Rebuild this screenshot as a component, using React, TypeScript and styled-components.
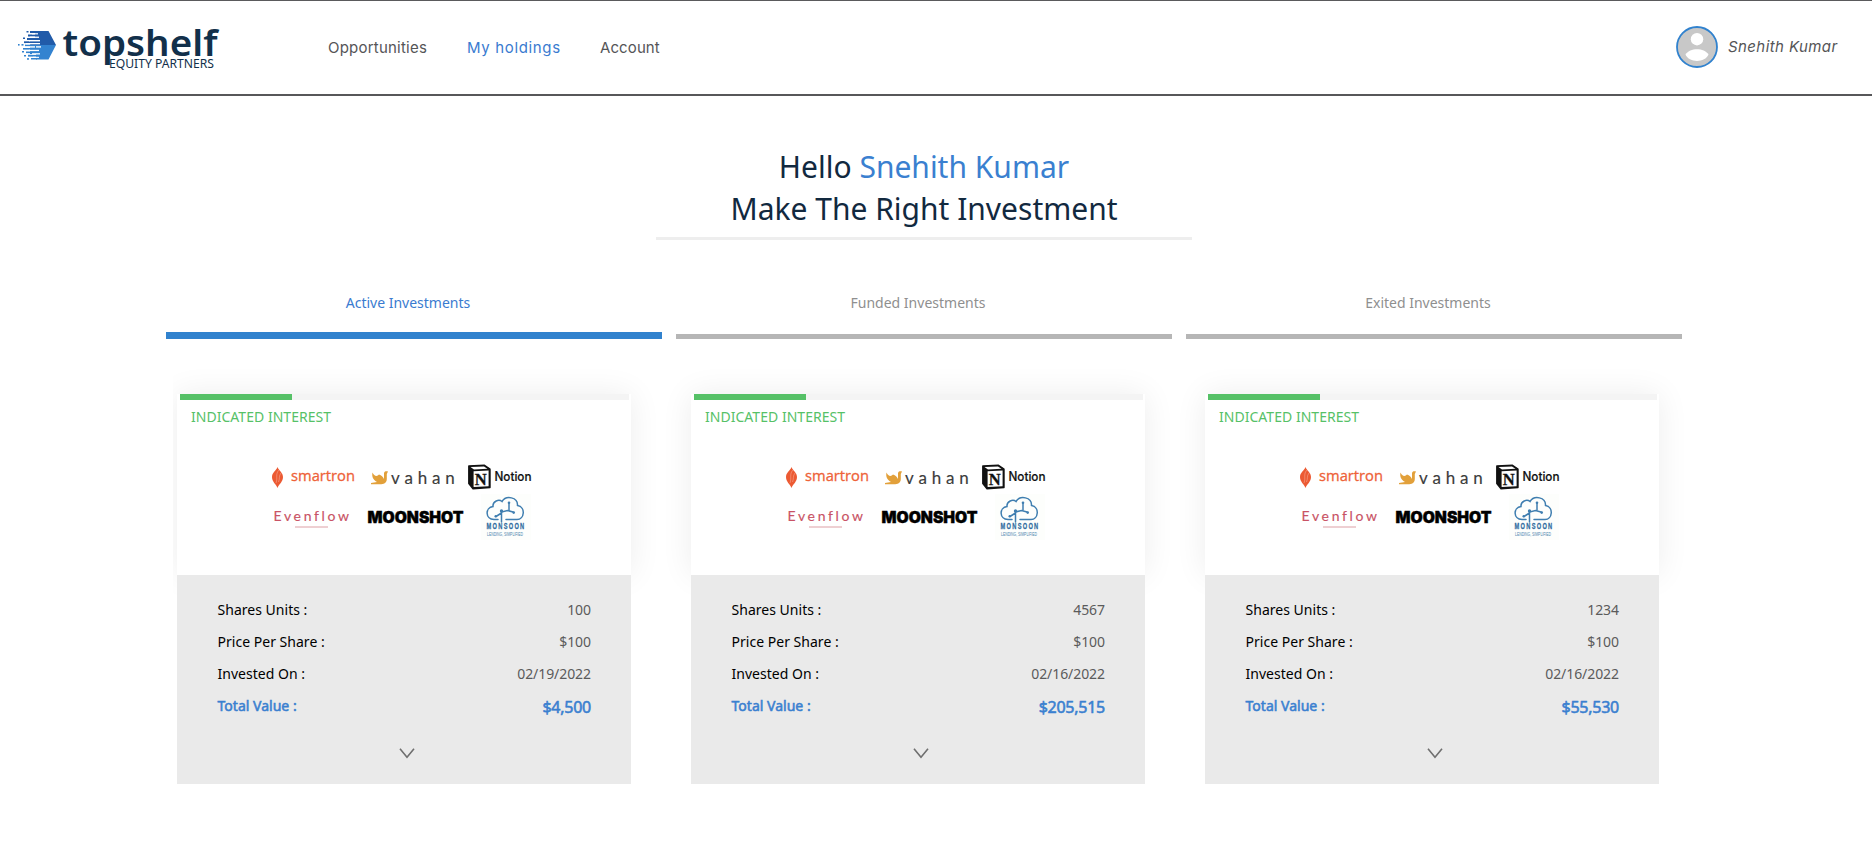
import React from 'react';
import styled, { createGlobalStyle } from 'styled-components';

const GlobalStyle = createGlobalStyle`
  *, *::before, *::after { box-sizing: border-box; }
  body {
    margin: 0;
    background: #fff;
    color: #000;
    font-family: 'Noto Sans', sans-serif;
    font-size: 14px;
    overflow-x: hidden;
  }
`;

const Page = styled.div`
  min-height: 854px;
`;

const Header = styled.header`
  display: flex;
  align-items: flex-start;
  height: 96px;
  border-top: 1px solid #5a5a5c;
  border-bottom: 2px solid #575759;
  background: #fff;
  font-family: Inter, sans-serif;
  color: #4d4d4f;
`;

const Logo = styled.svg`
  display: block;
  flex: none;
  width: 210px;
  height: 60px;
  margin: 17px 0 0 12px;
`;

const Nav = styled.nav`
  display: flex;
  margin: 35px 0 0 106px;
`;

const NavItem = styled.a<{ $active?: boolean; $width: number; $spacing?: number }>`
  width: ${(p) => p.$width}px;
  font-size: 15px;
  line-height: 24px;
  letter-spacing: ${(p) => p.$spacing ?? 0}px;
  white-space: nowrap;
  color: ${(p) => (p.$active ? '#3a7bd0' : '#555557')};
`;

const Profile = styled.div`
  display: flex;
  align-items: center;
  gap: 10px;
  margin: 25px 33px 0 auto;
`;

const Avatar = styled.svg`
  display: block;
  width: 42px;
  height: 42px;
`;

const ProfileName = styled.span`
  width: 111px;
  font-size: 15px;
  font-style: italic;
  line-height: 24px;
  letter-spacing: 0.42px;
  white-space: nowrap;
  color: #555557;
`;

const Main = styled.main`
  width: 1516px;
  margin: 0 0 0 166px;
`;

const Title = styled.h1`
  width: 536px;
  margin: 50px auto 0;
  padding-bottom: 7px;
  border-bottom: 3px solid #eee;
  font-size: 30px;
  font-weight: 400;
  line-height: 42px;
  text-align: center;
  color: #12293f;
`;

const TitleName = styled.span`
  color: #3a80d0;
`;

const Tabs = styled.div`
  display: grid;
  grid-template-columns: repeat(3, 496px);
  gap: 14px;
  margin-top: 47px;
`;

const Tab = styled.button<{ $active?: boolean }>`
  display: flex;
  justify-content: center;
  align-items: flex-start;
  height: 52px;
  padding: 6px 12px 0 0;
  border: 0;
  border-bottom: ${(p) => (p.$active ? '7px solid #3182ce' : '5px solid #b6b6b6')};
  background: none;
  font: inherit;
  line-height: 20px;
  color: ${(p) => (p.$active ? '#3a7bd0' : '#8f8f8f')};
`;

const Cards = styled.div`
  display: grid;
  grid-template-columns: repeat(3, 454px);
  gap: 60px;
  width: 1516px;
  margin: 25px 0 0 7px;
  padding: 30px 0 30px 4px;
  overflow: hidden;
`;

const Card = styled.article`
  display: flex;
  flex-direction: column;
`;

const CardTop = styled.div`
  height: 181px;
  padding: 0 2px 0 3px;
  background: #fff;
  box-shadow: 0 0 30px rgba(0, 0, 0, 0.075);
`;

const Track = styled.div`
  height: 6px;
  background: #f4f4f4;
`;

const Progress = styled.div`
  height: 6px;
  background: #56c167;
`;

const Status = styled.div`
  height: 40px;
  padding: 7px 0 0 11px;
  line-height: 20px;
  letter-spacing: 0.03px;
  color: #56c167;
`;

const Partners = styled.svg`
  display: block;
  width: 300px;
  height: 120px;
  margin-left: 70px;
`;

const Details = styled.div`
  height: 209px;
  padding: 19px 40px 0 40.5px;
  background: #eaeaea;
`;

const Row = styled.div<{ $total?: boolean }>`
  display: flex;
  justify-content: space-between;
  height: 32px;
  line-height: 32px;
  letter-spacing: 0.02px;
  color: ${(p) => (p.$total ? '#3a80d0' : '#000')};
  -webkit-text-stroke: ${(p) => (p.$total ? '0.55px #3a80d0' : '0')};
`;

const Value = styled.span<{ $total?: boolean }>`
  padding-top: ${(p) => (p.$total ? 1 : 0)}px;
  font-size: ${(p) => (p.$total ? 16 : 14)}px;
  letter-spacing: ${(p) => (p.$total ? -0.25 : -0.07)}px;
  color: ${(p) => (p.$total ? '#3a80d0' : '#5b5b5b')};
`;

const Expand = styled.button`
  display: flex;
  justify-content: center;
  width: 100%;
  height: 18px;
  margin-top: 22px;
  padding: 3px 0 0 6px;
  border: 0;
  background: none;
`;

function BrandLogo() {
  return (
    <Logo viewBox="12 18 210 60">
      <path d="M35 31H48.5L56 45H30V39H35Z" fill="#215ba9" />
      <path d="M30 45H56L48.5 59.5H36V54H30Z" fill="#3383d0" />
      <g fill="#215ba9">
        <rect x="26.5" y="31" width="2" height="1.5" />
        <rect x="30" y="31" width="5" height="2" />
        <rect x="28" y="34.5" width="8" height="2" />
        <rect x="23" y="37.5" width="2" height="1.5" />
        <rect x="27" y="38" width="9" height="2" />
        <rect x="24" y="41.3" width="7" height="1.8" />
      </g>
      <g fill="#3383d0">
        <rect x="18" y="44" width="1.6" height="1.6" />
        <rect x="21.5" y="44" width="2" height="1.6" />
        <rect x="25" y="44.6" width="6" height="1.5" />
        <rect x="23" y="48" width="8" height="1.6" />
        <rect x="22" y="51" width="2" height="1.5" />
        <rect x="26" y="51.5" width="6" height="1.6" />
        <rect x="24" y="55" width="2" height="1.5" />
        <rect x="28" y="54.8" width="9" height="1.8" />
        <rect x="27" y="58.2" width="2" height="1.5" />
        <rect x="31" y="58" width="6" height="1.5" />
      </g>
      <g fill="#fff">
        <rect x="32" y="33.2" width="6" height="1.2" />
        <rect x="30" y="36.6" width="9" height="1.3" />
        <rect x="29" y="40" width="11" height="1.4" />
        <rect x="26" y="43" width="14" height="1.3" />
        <rect x="30" y="46.2" width="5" height="1.4" />
        <rect x="36" y="46.2" width="5" height="1.4" />
        <rect x="29" y="49.8" width="10" height="1.3" />
        <rect x="32" y="53.2" width="8" height="1.3" />
        <rect x="33" y="56.8" width="6" height="1.1" />
      </g>
      <text x="62.5" y="55.5" fontFamily="Noto Sans, sans-serif" fontSize="35.5" fontWeight="600" fill="#12304b" textLength="155" lengthAdjust="spacingAndGlyphs">
        topshelf
      </text>
      <text x="109" y="68.3" fontFamily="Noto Sans, sans-serif" fontSize="12.5" fill="#12304b" textLength="105" lengthAdjust="spacingAndGlyphs">
        EQUITY PARTNERS
      </text>
    </Logo>
  );
}

function PartnerLogos() {
  return (
    <Partners viewBox="0 0 300 120">
      <path d="M27.5 27C29 31 33 32.5 33 37C33 42 29 44 27.5 48C26 44 22 42 22 37C22 32.5 26 31 27.5 27Z" fill="#ec5a33" />
      <path d="M29 30C25 34 28 38 26 43M31 33C28.5 36 30 39 28.5 42" fill="none" stroke="#fff" strokeOpacity=".4" strokeWidth=".7" />
      <text x="41" y="41" fontFamily="Open Sans, sans-serif" fontSize="15" fill="#ee6238" stroke="#ee6238" strokeWidth=".3" textLength="64" lengthAdjust="spacingAndGlyphs">
        smartron
      </text>
      <path d="M122.5 32.5C124 36 127 37 129 34.5C131.5 35 133 37 134 39V33.5C134 31.3 136 31 138 31.5L136.8 34V39C136.8 43 133.5 44.3 130 44.3H121V43L127 42C123.5 40 121.5 37 122.5 32.5Z" fill="#e2a03a" />
      <text x="141" y="44" fontFamily="Lato, sans-serif" fontSize="17" fill="#3c3c3c" stroke="#3c3c3c" strokeWidth=".15" letterSpacing="4.8">
        vahan
      </text>
      <path d="M218.8 26L234.5 25.3L240 29V47.5L223 48.7L218.8 43.5Z" fill="#111" stroke="#111" strokeWidth="1.4" strokeLinejoin="round" />
      <path d="M220.5 27L234 26.5L237.5 28.7L224 29.4Z" fill="#fff" />
      <path d="M223.6 31.3L238.6 30.5V46.2L223.6 47Z" fill="#fff" />
      <text x="224.8" y="44.6" fontFamily="Liberation Serif, serif" fontSize="16.5" fontWeight="700" fill="#111" stroke="#111" strokeWidth=".3">
        N
      </text>
      <text x="244.5" y="41" fontFamily="Inter, sans-serif" fontSize="12.5" fontWeight="500" fill="#111" stroke="#111" strokeWidth=".2" textLength="37" lengthAdjust="spacingAndGlyphs">
        Notion
      </text>
      <text x="23.5" y="81" fontFamily="Lato, sans-serif" fontSize="14" fill="#c95365" stroke="#c95365" strokeWidth=".15" letterSpacing="2.65" style={{ fontVariantLigatures: 'none' }}>
        Evenflow
      </text>
      <path d="M45 87H78" stroke="#dda0a6" strokeWidth="1" />
      <text x="117.5" y="82.7" fontFamily="Inter, sans-serif" fontSize="15.5" fontWeight="900" fill="#000" stroke="#000" strokeWidth=".4" textLength="96" lengthAdjust="spacingAndGlyphs">
        MOONSHOT
      </text>
      <rect x="231" y="54" width="50" height="46" fill="#fdfefc" />
      <g fill="none" stroke="#3f7eb0" strokeWidth="1.5" strokeLinecap="round">
        <path d="M248 79.5H244C235 79 235 67.5 243 66.5C242.5 61 249 59 252 61.5C256 55 268 57 267.5 65.5C276 67 274.5 79.5 267 79.5H256" />
        <path d="M251.5 82V72L257.5 70.5L263 72M259 70V63M251.5 73L246 76.5" />
      </g>
      <circle cx="251.5" cy="71" r="1.7" fill="#3f7eb0" />
      <circle cx="259" cy="62.8" r="1.3" fill="#3f7eb0" />
      <circle cx="263.7" cy="72.6" r="1.3" fill="#3f7eb0" />
      <circle cx="245.7" cy="76.3" r="1.2" fill="#3f7eb0" />
      <text transform="translate(236.6 89.2) scale(.66 1)" fontFamily="Liberation Sans, sans-serif" fontSize="8.6" fontWeight="700" fill="#2f6c9f" stroke="#2f6c9f" strokeWidth=".25" textLength="57">
        MONSOON
      </text>
      <text x="237" y="96.3" fontFamily="Liberation Sans, sans-serif" fontSize="4.8" fill="#4c86ae" textLength="36" lengthAdjust="spacingAndGlyphs">
        LENDING, SIMPLIFIED
      </text>
    </Partners>
  );
}

interface Holding {
  units: string;
  price: string;
  date: string;
  total: string;
}

const holdings: Holding[] = [
  { units: '100', price: '$100', date: '02/19/2022', total: '$4,500' },
  { units: '4567', price: '$100', date: '02/16/2022', total: '$205,515' },
  { units: '1234', price: '$100', date: '02/16/2022', total: '$55,530' },
];

function HoldingCard({ holding }: { holding: Holding }) {
  return (
    <Card>
      <CardTop>
        <Track>
          <Progress style={{ width: '25%' }} />
        </Track>
        <Status>INDICATED INTEREST</Status>
        <PartnerLogos />
      </CardTop>
      <Details>
        <Row>
          <span>Shares Units :</span>
          <Value>{holding.units}</Value>
        </Row>
        <Row>
          <span>Price Per Share :</span>
          <Value>{holding.price}</Value>
        </Row>
        <Row>
          <span>Invested On :</span>
          <Value>{holding.date}</Value>
        </Row>
        <Row $total>
          <span>Total Value :</span>
          <Value $total>{holding.total}</Value>
        </Row>
        <Expand aria-label="Show more">
          <svg width="16" height="12" viewBox="0 0 16 12">
            <path d="M1 1.8L8 10.2L15 1.8" fill="none" stroke="#6f6f6f" strokeWidth="1.6" />
          </svg>
        </Expand>
      </Details>
    </Card>
  );
}

export default function App() {
  return (
    <Page>
      <GlobalStyle />
      <Header>
        <BrandLogo />
        <Nav>
          <NavItem $width={139} $spacing={0.22}>Opportunities</NavItem>
          <NavItem $width={133} $spacing={0.65} $active>My holdings</NavItem>
          <NavItem $width={70} $spacing={0.1}>Account</NavItem>
        </Nav>
        <Profile>
          <Avatar viewBox="0 0 42 42">
            <circle cx="21" cy="21" r="20" fill="#c8c8c8" stroke="#3182ce" strokeWidth="1.8" />
            <circle cx="21" cy="13.2" r="6.2" fill="#fff" />
            <path d="M9.5 28.5C14 21.5 28 21.5 32.5 28.5C29 37 13 37 9.5 28.5Z" fill="#fff" />
          </Avatar>
          <ProfileName>Snehith Kumar</ProfileName>
        </Profile>
      </Header>
      <Main>
        <Title>
          Hello <TitleName>Snehith Kumar</TitleName>
          <br />
          Make The Right Investment
        </Title>
        <Tabs>
          <Tab $active>Active Investments</Tab>
          <Tab>Funded Investments</Tab>
          <Tab>Exited Investments</Tab>
        </Tabs>
        <Cards>
          {holdings.map((holding) => (
            <HoldingCard key={holding.total} holding={holding} />
          ))}
        </Cards>
      </Main>
    </Page>
  );
}
